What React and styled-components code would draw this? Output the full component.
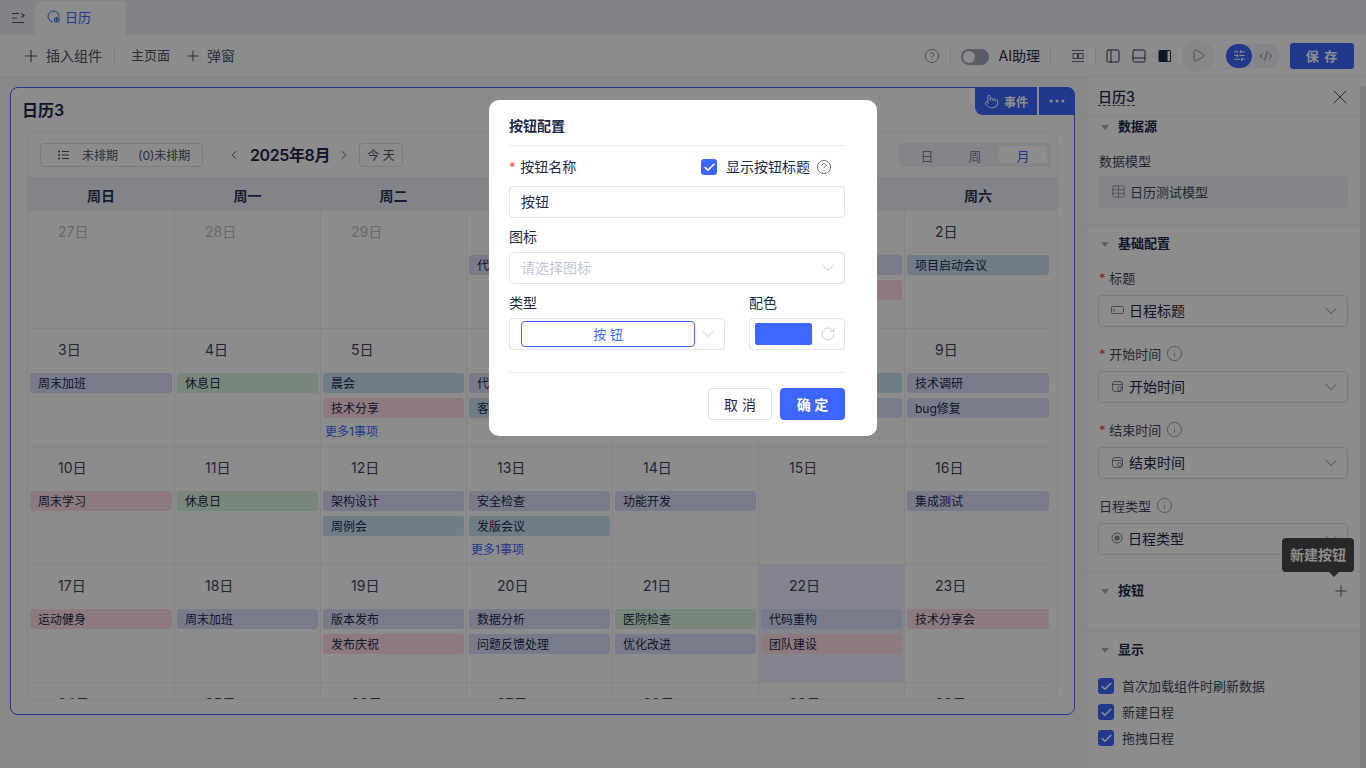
import React from 'react';
import styled, { createGlobalStyle } from 'styled-components';
import {
  Check, ChevronDown, ChevronLeft, ChevronRight, CircleHelp, CodeXml, Ellipsis, Info,
  PanelBottom, PanelLeft, Play, Plus, Pointer, RotateCw, SlidersHorizontal, Table, X,
} from 'lucide-react';

const Global = createGlobalStyle`
  html, body { margin: 0; height: 100%; overflow: hidden; }
  body { font-family: Inter, "Noto Sans CJK SC", sans-serif; color: #1c2a4d; background: #f5f7fc; }
  * { box-sizing: border-box; }
`;

const Page = styled.div`
  display: flex;
  flex-direction: column;
  height: 768px;
  background: #f5f7fc;
`;

const TabBar = styled.div`
  height: 35px;
  display: flex;
  background: #ebeef6;
`;

const MenuToggle = styled.div`
  width: 35px;
  display: flex;
  align-items: center;
  justify-content: center;
  color: #4c5468;
`;

const Tab = styled.div`
  width: 91px;
  margin-top: 1px;
  display: flex;
  align-items: center;
  gap: 5px;
  padding: 0 0 3px 12px;
  background: #fff;
  border-radius: 5px 5px 0 0;
  color: #3d66ff;
  font-size: 13px;
`;

const Toolbar = styled.div`
  height: 42px;
  display: flex;
  align-items: center;
  padding: 0 12px 0 21px;
  background: #fff;
  border-bottom: 1px solid #eceef3;
  font-size: 14px;
  color: #4b5468;
`;

const ToolLabel = styled.span`
  margin-left: ${(p) => p.$left || 0}px;
  padding-bottom: 2px;
  color: ${(p) => p.$dark ? '#1c2a4d' : 'inherit'};
  font-size: ${(p) => p.$size || 14}px;
  white-space: nowrap;
`;

const ToolIcon = styled.span`
  display: flex;
  margin: 0 ${(p) => p.$right || 0}px 0 ${(p) => p.$left || 0}px;
  color: ${(p) => p.$color || 'inherit'};
`;

const Sep = styled.i`
  width: 1px;
  height: 16px;
  background: #e4e6ec;
  margin: 0 ${(p) => p.$right ?? p.$x}px 0 ${(p) => p.$x}px;
`;

const Spacer = styled.div`
  flex: 1;
`;

const Toggle = styled.div`
  width: 28px;
  height: 16px;
  margin-top: 2px;
  padding: 2px;
  border-radius: 8px;
  background: #a3a9b8;

  &::before {
    content: '';
    display: block;
    width: 12px;
    height: 12px;
    border-radius: 50%;
    background: #fff;
  }
`;

const IconButton = styled.div`
  width: 26px;
  display: flex;
  justify-content: center;
  margin-left: ${(p) => p.$left || 0}px;
  color: ${(p) => p.$color || '#1c2a4d'};
`;

const PlayButton = styled.div`
  width: 32px;
  height: 32px;
  margin-left: 4px;
  border-radius: 50%;
  background: #f5f6fa;
  display: flex;
  align-items: center;
  justify-content: center;
  color: #7d869c;
`;

const ModeSwitch = styled.div`
  width: 54px;
  height: 24px;
  margin-left: 12px;
  border-radius: 12px;
  background: #f0f2f7;
  display: flex;
  align-items: center;
  color: #6b7489;
`;

const ModeItem = styled.div`
  width: ${(p) => p.$on ? 26 : 28}px;
  height: 24px;
  border-radius: 12px;
  display: flex;
  align-items: center;
  justify-content: center;
  background: ${(p) => p.$on ? '#3d66ff' : 'transparent'};
  color: ${(p) => p.$on ? '#fff' : 'inherit'};
`;

const SaveButton = styled.button`
  width: 64px;
  height: 26px;
  margin-left: 10px;
  border: 0;
  border-radius: 3px;
  background: #3d66ff;
  color: #fff;
  font: 600 13px Inter, "Noto Sans CJK SC", sans-serif;
  letter-spacing: 1px;
`;

const Main = styled.div`
  flex: 1;
  min-height: 0;
  display: flex;
`;

const Canvas = styled.div`
  width: 1086px;
  padding: 10px 11px 0 10px;
`;

const Card = styled.div`
  position: relative;
  height: 628px;
  padding: 0 16px;
  background: #fff;
  border: 1px solid #3d66ff;
  border-radius: 8px;
`;

const CardTitle = styled.div`
  height: 44px;
  margin-left: -5px;
  padding-top: 11px;
  font-size: 16px;
  font-weight: 600;
  line-height: 22px;
  color: #1c2a4d;
`;

const CardActions = styled.div`
  position: absolute;
  top: -1px;
  right: -1px;
  height: 28px;
  display: flex;
  gap: 2px;
  border-radius: 0 8px 0 8px;
  overflow: hidden;
  background: #fff;
  color: #fff;
  font-size: 12px;
  font-weight: 600;
`;

const CardAction = styled.div`
  width: ${(p) => p.$w}px;
  display: flex;
  align-items: center;
  justify-content: center;
  gap: 5px;
  background: #3d66ff;
`;

const Calendar = styled.div`
  height: 568px;
  border: 1px solid #eef0f4;
  border-radius: 8px;
  overflow: hidden;
`;

const CalBar = styled.div`
  height: 44px;
  display: flex;
  align-items: center;
  padding: 0 6px 0 12px;
`;

const UnplannedButton = styled.div`
  width: 163px;
  height: 24px;
  display: flex;
  align-items: center;
  padding: 0 0 1px 17px;
  border: 1px solid #dfe2ea;
  border-radius: 4px;
  font-size: 12px;
  color: #4b5468;

  span { margin-left: 13px; }
  span + span { margin-left: 20px; }
`;

const NavArrow = styled.div`
  width: 14px;
  display: flex;
  justify-content: center;
  color: #4b5468;
  margin: 0 ${(p) => p.$right || 0}px 0 ${(p) => p.$left || 0}px;
`;

const MonthTitle = styled.div`
  width: 80px;
  padding-bottom: 3px;
  font-size: 16px;
  font-weight: 600;
  letter-spacing: -0.4px;
  white-space: nowrap;
`;

const TodayButton = styled.div`
  width: 44px;
  height: 24px;
  margin-left: 8px;
  padding-bottom: 1px;
  border: 1px solid #dfe2ea;
  border-radius: 4px;
  display: flex;
  align-items: center;
  justify-content: center;
  font-size: 12px;
  color: #4b5468;
`;

const ViewSwitch = styled.div`
  width: 152px;
  height: 24px;
  padding: 3px 4px;
  display: flex;
  background: #f0f2f7;
  border-radius: 4px;
  font-size: 13px;
  color: #7d869c;
`;

const ViewItem = styled.div`
  width: 48px;
  display: flex;
  align-items: center;
  justify-content: center;
  border-radius: 2px;
  background: ${(p) => p.$on ? '#fff' : 'transparent'};
  color: ${(p) => p.$on ? '#3d66ff' : 'inherit'};
`;

const WeekHead = styled.div`
  height: 33px;
  display: grid;
  grid-template-columns: repeat(6, 146px) 147px;
  padding-right: 6px;
  background: #edf0f6;
  font-size: 14px;
  font-weight: 600;
  color: #2c3756;
`;

const WeekCell = styled.div`
  display: flex;
  align-items: center;
  justify-content: center;
  padding-top: 3px;
  border-left: 1px solid #e9ebf1;

  &:first-child { border-left: 0; }
`;

const Month = styled.div`
  display: grid;
  width: 1023px;
  grid-template-columns: repeat(6, 146px) 147px;
  grid-auto-rows: 118px;
`;

const Day = styled.div`
  padding: 0 2px;
  border-left: 1px solid #f0f1f4;
  border-top: 1px solid #f0f1f4;
  background: ${(p) => p.$today ? '#eff0ff' : 'transparent'};

  &:nth-child(7n + 1) { border-left: 0; }
`;

const DayNumber = styled.div`
  height: 44px;
  padding-left: 28px;
  font-size: 14px;
  line-height: 42px;
  color: ${(p) => p.$dim ? '#bcc0ca' : '#3f4860'};
`;

const tones = {
  purple: '#dde1fb',
  pink: '#ffdfe6',
  green: '#dff3e0',
  blue: '#cbe3f5',
};

const Event = styled.div`
  height: 20px;
  margin-bottom: 5px;
  padding-left: 8px;
  border-radius: 3px;
  background: ${(p) => tones[p.$tone]};
  font-size: 12px;
  line-height: 21px;
  color: #1c2a4d;
  white-space: nowrap;
  overflow: hidden;
`;

const MoreLink = styled.div`
  padding-left: 2px;
  margin-top: -1px;
  font-size: 12px;
  line-height: 20px;
  color: #3d66ff;
`;

const Panel = styled.div`
  width: 280px;
  display: flex;
  background: #fff;
  border-left: 1px solid #eceef3;
`;

const PanelBody = styled.div`
  width: 273px;
  flex: none;
`;

const Scrollbar = styled.div`
  flex: 1;
  margin-top: 9px;
  background: #e3e3e3;
`;

const PanelHead = styled.div`
  height: 40px;
  display: flex;
  align-items: center;
  justify-content: space-between;
  padding: 0 8px 0 11px;
  border-bottom: 1px solid #eceef3;
  color: #1c2a4d;
  svg { color: #4b5468; }
`;

const PanelTitle = styled.div`
  font-size: 14px;
  font-weight: 500;
  line-height: 17px;
  border-bottom: 1px dashed #4b5468;
`;

const Section = styled.section`
  padding: ${(p) => p.$top ?? 9}px 12px ${(p) => p.$bottom ?? 16}px 11px;
  border-bottom: ${(p) => p.$plain ? '0' : '1px solid #eceef3'};
`;

const SectionHead = styled.div`
  height: 20px;
  display: flex;
  align-items: center;
  padding: 0 0 2px 3px;
  font-size: 13px;
  font-weight: 600;
  line-height: 18px;

  &::before {
    content: '';
    width: 0;
    height: 0;
    margin: 2px 9px 0 0;
    border: 4px solid transparent;
    border-top: 5px solid #a9afbf;
    border-bottom: 0;
  }
`;

const Grow = styled.div`
  flex: 1;
`;

const FieldStack = styled.div`
  margin-top: 15px;
`;

const Field = styled.div`
  margin-top: ${(p) => p.$top ?? 0}px;
  margin-bottom: 18px;

  &:last-child { margin-bottom: 0; }
`;

const FieldLabel = styled.div`
  height: 20px;
  margin-top: ${(p) => -(p.$lift || 0)}px;
  margin-bottom: ${(p) => 6 + (p.$lift || 0)}px;
  padding-left: 1px;
  display: flex;
  align-items: center;
  gap: 5px;
  font-size: 13px;
  color: #3f4860;
  svg { color: #7d869c; }
`;

const Star = styled.span`
  color: #f5483b;
  margin-right: ${(p) => p.$right ?? 0}px;
  font-size: 13px;
`;

const PanelSelect = styled.div`
  height: 32px;
  display: flex;
  align-items: center;
  gap: 5px;
  padding: 0 6px 2px 12px;
  border: 1px solid #dfe2ea;
  border-radius: 4px;
  font-size: 14px;
  color: #1c2a4d;
  svg { color: #7d869c; flex: none; }
  svg:last-child { margin: 2px 0 0 auto; }
`;

const ModelBox = styled.div`
  height: 32px;
  display: flex;
  align-items: center;
  gap: 4px;
  padding: 0 0 1px 13px;
  background: #f0f2f7;
  border-radius: 4px;
  font-size: 13px;
  color: #3f4860;
  svg { color: #7d869c; }
`;

const PlusAnchor = styled.div`
  position: relative;
  display: flex;
  margin: 2px -2px 0 0;
  color: #5c6780;
`;

const Tooltip = styled.div`
  position: absolute;
  right: -4px;
  bottom: 28px;
  width: 72px;
  height: 34px;
  border-radius: 4px;
  background: #4a4a4a;
  color: #fff;
  font-size: 14px;
  font-weight: 600;
  line-height: 34px;
  text-align: center;

  &::after {
    content: '';
    position: absolute;
    left: 47px;
    bottom: -5px;
    border: 5px solid transparent;
    border-top-color: #4a4a4a;
    border-bottom: 0;
  }
`;

const CheckRow = styled.div`
  display: flex;
  align-items: center;
  gap: 8px;
  height: 16px;
  margin-top: 10px;
  font-size: 13px;
  color: #3f4860;
`;

const CheckText = styled.span`
  margin-top: -2px;
`;

const CheckList = styled.div`
  padding-top: 8px;
`;

const CheckBox = styled.span`
  width: 16px;
  height: 16px;
  flex: none;
  display: flex;
  align-items: center;
  justify-content: center;
  background: #3d66ff;
  border-radius: 3px;
  color: #fff;
`;

const Overlay = styled.div`
  position: fixed;
  inset: 0;
  display: flex;
  justify-content: center;
  align-items: flex-start;
  padding-top: 100px;
  background: rgba(0, 0, 0, 0.45);
`;

const Modal = styled.div`
  width: 388px;
  height: 336px;
  padding: 0 32px 16px 20px;
  background: #fff;
  border-radius: 10px;
  font-size: 14px;
  color: #1c2a4d;
`;

const ModalHead = styled.div`
  height: 46px;
  padding-top: 16px;
  border-bottom: 1px solid #eceef3;
  font-size: 14px;
  font-weight: 600;
  line-height: 20px;
`;

const NameRow = styled.div`
  height: 20px;
  margin-top: 11px;
  display: flex;
  align-items: center;
  line-height: 20px;
`;

const NameHint = styled.span`
  margin-left: 9px;
  white-space: nowrap;
`;

const HintIcon = styled.span`
  display: flex;
  margin: 0 13px 0 6px;
  color: #4b5468;
`;

const Label = styled.div`
  line-height: 20px;
  margin-top: ${(p) => p.$top ?? 9}px;
  margin-bottom: 5px;
`;

const Input = styled.input`
  display: block;
  width: 100%;
  height: 32px;
  margin-top: 9px;
  padding: 0 11px 2px;
  border: 1px solid #dfe2ea;
  border-radius: 4px;
  font: 14px Inter, "Noto Sans CJK SC", sans-serif;
  color: #1c2a4d;
  outline: 0;
`;

const Select = styled.div`
  width: 100%;
  height: 32px;
  display: flex;
  align-items: center;
  justify-content: space-between;
  padding: 0 6px 2px 11px;
  border: 1px solid #dfe2ea;
  border-radius: 4px;
  color: #c0c6d6;
  svg { color: #bcc2d2; margin-top: 2px; }
`;

const TypeRow = styled.div`
  display: flex;
  gap: 24px;
`;

const TypeColumn = styled.div`
  width: ${(p) => p.$w}px;
`;

const TypeChip = styled.div`
  width: 174px;
  height: 26px;
  margin-top: 2px;
  border: 1px solid #3d66ff;
  border-radius: 4px;
  color: #3d66ff;
  font-size: 13px;
  line-height: 24px;
  text-align: center;
`;

const ColorBox = styled.div`
  height: 32px;
  display: flex;
  align-items: center;
  justify-content: space-between;
  padding: 0 8px 0 5px;
  border: 1px solid #dfe2ea;
  border-radius: 4px;
  color: #c3c9d8;
`;

const Swatch = styled.div`
  width: 57px;
  height: 22px;
  border-radius: 2px;
  background: #3d66ff;
`;

const ModalFoot = styled.div`
  margin-top: 22px;
  padding-top: 15px;
  display: flex;
  justify-content: flex-end;
  gap: 8px;
  border-top: 1px solid #eceef3;
`;

const FootButton = styled.button`
  width: ${(p) => p.$primary ? 65 : 64}px;
  height: 32px;
  border: ${(p) => p.$primary ? '0' : '1px solid #dfe2ea'};
  border-radius: 4px;
  background: ${(p) => p.$primary ? '#3d66ff' : '#fff'};
  color: ${(p) => p.$primary ? '#fff' : '#1c2a4d'};
  font: ${(p) => p.$primary ? 600 : 400} 14px Inter, "Noto Sans CJK SC", sans-serif;
`;

const TabIcon = () => (
  <svg width="13" height="13" viewBox="0 0 13 13" fill="none" stroke="currentColor" strokeWidth="1">
    <path d="M6 12A5.5 5.5 0 1 1 12 6.5" />
    <rect x="7.5" y="7.5" width="4.5" height="4.5" rx="1" />
    <path d="M7.5 9.7h4.5M9.7 7.5v4.5" />
  </svg>
);

const MenuIcon = () => (
  <svg width="14" height="12" viewBox="0 0 14 12" fill="none" stroke="currentColor" strokeWidth="1.1">
    <path d="M1 1.5h7M1 6h5M1 10.5h12M10.5 1.5l2.5 2-2.5 2" />
  </svg>
);

const LayoutIcon = () => (
  <svg width="14" height="14" viewBox="0 0 14 14" fill="none" stroke="currentColor" strokeWidth="1">
    <path d="M1 1.5h12M1 12.5h12" />
    <rect x="2" y="4.5" width="4.5" height="5" />
    <rect x="7.5" y="4.5" width="4.5" height="5" />
  </svg>
);

const PanelRightSolid = () => (
  <svg width="14" height="14" viewBox="0 0 14 14">
    <rect x=".5" y="1" width="12.5" height="12" rx="1.5" fill="#1c2a4d" />
    <rect x="9.5" y="2" width="2.5" height="10" fill="#fff" />
  </svg>
);

const ListIcon = () => (
  <svg width="11" height="10" viewBox="0 0 11 10" fill="none" stroke="currentColor">
    <path d="M4 1.5h7M4 5h7M4 8.5h7" />
    <path d="M0 1.5h2M0 5h2M0 8.5h2" strokeWidth="1.6" />
  </svg>
);

const FieldTextIcon = () => (
  <svg width="13" height="10" viewBox="0 0 13 10" fill="none" stroke="currentColor">
    <rect x=".5" y="1.5" width="12" height="7" rx="1" />
    <path d="M3 3.5v3" />
  </svg>
);

const DateIcon = () => (
  <svg width="13" height="13" viewBox="0 0 13 13" fill="none" stroke="currentColor">
    <rect x="1.5" y="1.5" width="10" height="10" rx="2.5" />
    <path d="M1.5 4.5h10" />
    <circle cx="8.5" cy="8.5" r="2" />
  </svg>
);

const RadioIcon = () => (
  <svg width="12" height="12" viewBox="0 0 12 12">
    <circle cx="6" cy="6" r="5" fill="none" stroke="currentColor" />
    <circle cx="6" cy="6" r="2.6" fill="currentColor" />
  </svg>
);

const weekNames = ['周日', '周一', '周二', '周三', '周四', '周五', '周六'];

const days = [
  { n: 27, dim: true }, { n: 28, dim: true }, { n: 29, dim: true },
  { n: 30, dim: true, ev: [['代码评审', 'purple']] },
  { n: 31, dim: true },
  { n: 1, ev: [['需求评审', 'purple'], ['团队聚餐', 'pink']] },
  { n: 2, ev: [['项目启动会议', 'blue']] },
  { n: 3, ev: [['周末加班', 'purple']] },
  { n: 4, ev: [['休息日', 'green']] },
  { n: 5, ev: [['晨会', 'blue'], ['技术分享', 'pink']], more: 1 },
  { n: 6, ev: [['代码评审', 'purple'], ['客户沟通', 'blue']] },
  { n: 7 },
  { n: 8, ev: [['进度汇报', 'blue'], ['接口联调', 'purple']] },
  { n: 9, ev: [['技术调研', 'purple'], ['bug修复', 'purple']] },
  { n: 10, ev: [['周末学习', 'pink']] },
  { n: 11, ev: [['休息日', 'green']] },
  { n: 12, ev: [['架构设计', 'purple'], ['周例会', 'blue']] },
  { n: 13, ev: [['安全检查', 'purple'], ['发版会议', 'blue']], more: 1 },
  { n: 14, ev: [['功能开发', 'purple']] },
  { n: 15 },
  { n: 16, ev: [['集成测试', 'purple']] },
  { n: 17, ev: [['运动健身', 'pink']] },
  { n: 18, ev: [['周末加班', 'purple']] },
  { n: 19, ev: [['版本发布', 'purple'], ['发布庆祝', 'pink']] },
  { n: 20, ev: [['数据分析', 'purple'], ['问题反馈处理', 'purple']] },
  { n: 21, ev: [['医院检查', 'green'], ['优化改进', 'purple']] },
  { n: 22, today: true, ev: [['代码重构', 'purple'], ['团队建设', 'pink']] },
  { n: 23, ev: [['技术分享会', 'pink']] },
  { n: 24 }, { n: 25 }, { n: 26 }, { n: 27 }, { n: 28 }, { n: 29 }, { n: 30 },
];

const fields = [
  { label: '标题', required: true, icon: <FieldTextIcon />, value: '日程标题' },
  { label: '开始时间', required: true, info: true, icon: <DateIcon />, value: '开始时间' },
  { label: '结束时间', required: true, info: true, icon: <DateIcon />, value: '结束时间' },
  { label: '日程类型', info: true, icon: <RadioIcon />, value: '日程类型' },
];

const checks = ['首次加载组件时刷新数据', '新建日程', '拖拽日程'];

export default function App() {
  return (
    <>
      <Global />
      <Page>
        <TabBar>
          <MenuToggle><MenuIcon /></MenuToggle>
          <Tab><TabIcon />日历</Tab>
        </TabBar>

        <Toolbar>
          <Plus size={20} strokeWidth={1.3} />
          <ToolLabel $left={5}>插入组件</ToolLabel>
          <Sep $x={12} $right={16} />
          <ToolLabel $size={13}>主页面</ToolLabel>
          <ToolIcon $left={14}><Plus size={18} strokeWidth={1.3} /></ToolIcon>
          <ToolLabel $left={5}>弹窗</ToolLabel>
          <Spacer />
          <ToolIcon $color="#7d869c"><CircleHelp size={16} strokeWidth={1.3} /></ToolIcon>
          <Sep $x={10} />
          <Toggle />
          <ToolLabel $left={10} $dark>AI助理</ToolLabel>
          <Sep $x={10} />
          <IconButton $left={4} $color="#5c6780"><LayoutIcon /></IconButton>
          <Sep $x={4} />
          <IconButton><PanelLeft size={16} strokeWidth={1.4} /></IconButton>
          <IconButton><PanelBottom size={16} strokeWidth={1.4} /></IconButton>
          <IconButton><PanelRightSolid /></IconButton>
          <PlayButton><Play size={15} strokeWidth={1.5} /></PlayButton>
          <ModeSwitch>
            <ModeItem $on><SlidersHorizontal size={13} /></ModeItem>
            <ModeItem><CodeXml size={14} strokeWidth={1.5} /></ModeItem>
          </ModeSwitch>
          <SaveButton>保 存</SaveButton>
        </Toolbar>

        <Main>
          <Canvas>
            <Card>
              <CardTitle>日历3</CardTitle>
              <CardActions>
                <CardAction $w={62}><Pointer size={15} strokeWidth={1.5} />事件</CardAction>
                <CardAction $w={36}><Ellipsis size={20} strokeWidth={1.8} /></CardAction>
              </CardActions>
              <Calendar>
                <CalBar>
                  <UnplannedButton>
                    <ListIcon />
                    <span>未排期</span>
                    <span>(0)未排期</span>
                  </UnplannedButton>
                  <NavArrow $left={24} $right={9}><ChevronLeft size={16} strokeWidth={1.6} /></NavArrow>
                  <MonthTitle>2025年8月</MonthTitle>
                  <NavArrow $left={7}><ChevronRight size={16} strokeWidth={1.6} /></NavArrow>
                  <TodayButton>今 天</TodayButton>
                  <Spacer />
                  <ViewSwitch>
                    <ViewItem>日</ViewItem>
                    <ViewItem>周</ViewItem>
                    <ViewItem $on>月</ViewItem>
                  </ViewSwitch>
                </CalBar>
                <WeekHead>
                  {weekNames.map((name) => <WeekCell key={name}>{name}</WeekCell>)}
                </WeekHead>
                <Month>
                  {days.map((day, i) => (
                    <Day key={i} $today={day.today}>
                      <DayNumber $dim={day.dim}>{day.n}日</DayNumber>
                      {(day.ev || []).map(([title, tone]) => (
                        <Event key={title} $tone={tone}>{title}</Event>
                      ))}
                      {day.more && <MoreLink>更多{day.more}事项</MoreLink>}
                    </Day>
                  ))}
                </Month>
              </Calendar>
            </Card>
          </Canvas>

          <Panel>
            <PanelBody>
              <PanelHead>
                <PanelTitle>日历3</PanelTitle>
                <X size={24} strokeWidth={1} />
              </PanelHead>

              <Section $top={0} $bottom={17}>
                <SectionHead>数据源</SectionHead>
                <Field $top={13}>
                  <FieldLabel>数据模型</FieldLabel>
                  <ModelBox><Table size={15} strokeWidth={1.2} />日历测试模型</ModelBox>
                </Field>
              </Section>

              <Section $top={8}>
                <SectionHead>基础配置</SectionHead>
                <FieldStack>
                  {fields.map((f) => (
                    <Field key={f.label}>
                      <FieldLabel $lift={2}>
                        <span>{f.required && <Star>* </Star>}{f.label}</span>
                        {f.info && <Info size={17} strokeWidth={1.1} />}
                      </FieldLabel>
                      <PanelSelect>
                        {f.icon}
                        {f.value}
                        <ChevronDown size={20} strokeWidth={1.2} />
                      </PanelSelect>
                    </Field>
                  ))}
                </FieldStack>
              </Section>

              <Section $bottom={29}>
                <SectionHead>
                  按钮
                  <Grow />
                  <PlusAnchor>
                    <Plus size={18} strokeWidth={1.4} />
                    <Tooltip>新建按钮</Tooltip>
                  </PlusAnchor>
                </SectionHead>
              </Section>

              <Section $plain $bottom={0}>
                <SectionHead>显示</SectionHead>
                <CheckList>
                  {checks.map((c) => (
                    <CheckRow key={c}>
                      <CheckBox><Check size={13} strokeWidth={3} /></CheckBox>
                      <CheckText>{c}</CheckText>
                    </CheckRow>
                  ))}
                </CheckList>
              </Section>
            </PanelBody>
            <Scrollbar />
          </Panel>
        </Main>
      </Page>

      <Overlay>
        <Modal>
          <ModalHead>按钮配置</ModalHead>
          <NameRow>
            <Star $right={1}>*&nbsp;</Star>按钮名称
            <Grow />
            <CheckBox><Check size={13} strokeWidth={3} /></CheckBox>
            <NameHint>显示按钮标题</NameHint>
            <HintIcon><CircleHelp size={16} strokeWidth={1.2} /></HintIcon>
          </NameRow>
          <Input defaultValue="按钮" />
          <Label>图标</Label>
          <Select>请选择图标<ChevronDown size={20} strokeWidth={1.1} /></Select>
          <TypeRow>
            <TypeColumn $w={216}>
              <Label>类型</Label>
              <Select>
                <TypeChip>按 钮</TypeChip>
                <ChevronDown size={20} strokeWidth={1.1} />
              </Select>
            </TypeColumn>
            <TypeColumn $w={96}>
              <Label>配色</Label>
              <ColorBox>
                <Swatch />
                <RotateCw size={16} strokeWidth={1.3} />
              </ColorBox>
            </TypeColumn>
          </TypeRow>
          <ModalFoot>
            <FootButton>取 消</FootButton>
            <FootButton $primary>确 定</FootButton>
          </ModalFoot>
        </Modal>
      </Overlay>
    </>
  );
}
